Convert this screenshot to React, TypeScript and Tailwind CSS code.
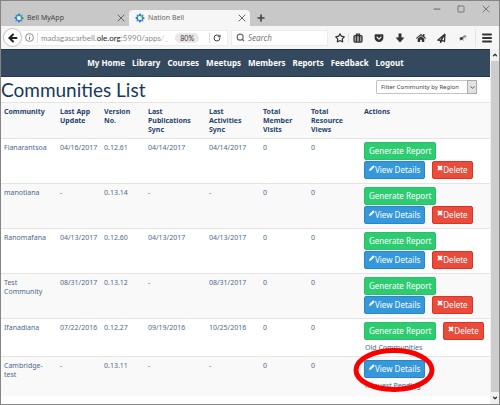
import React from "react";
import { ArrowLeft, ChevronDown, ChevronUp, Menu, Minus, Plus, RotateCw, Search, Square, Star, X } from "lucide-react";
import { FaGetPocket, FaHome } from "react-icons/fa";

type ActionKind = "report" | "view" | "delete";

interface Community {
  name: string;
  updated: string;
  version: string;
  publications: string;
  activities: string;
  actions: ActionKind[];
  note?: string;
  highlighted?: boolean;
}

const full: ActionKind[] = ["report", "view", "delete"];

const communities: Community[] = [
  { name: "Fianarantsoa", updated: "04/16/2017", version: "0.12.61", publications: "04/14/2017", activities: "04/14/2017", actions: full },
  { name: "manotiana", updated: "-", version: "0.13.14", publications: "-", activities: "-", actions: full },
  { name: "Ranomafana", updated: "04/13/2017", version: "0.12.60", publications: "04/13/2017", activities: "04/13/2017", actions: full },
  { name: "Test Community", updated: "08/31/2017", version: "0.13.12", publications: "-", activities: "08/31/2017", actions: full },
  { name: "Ifanadiana", updated: "07/22/2016", version: "0.12.27", publications: "09/19/2016", activities: "10/25/2016", actions: ["report", "delete"], note: "Old Communities" },
  { name: "Cambridge-test", updated: "-", version: "0.13.11", publications: "-", activities: "-", actions: ["view"], note: "Request Pending", highlighted: true },
];

const navLinks = ["My Home", "Library", "Courses", "Meetups", "Members", "Reports", "Feedback", "Logout"];

const columns = [
  { label: "Community", width: "w-[56px]" },
  { label: "Last App Update", width: "w-[44px]" },
  { label: "Version No.", width: "w-[44px]" },
  { label: "Last Publications Sync", width: "w-[61px]" },
  { label: "Last Activities Sync", width: "w-[54px]" },
  { label: "Total Member Visits", width: "w-[48px]" },
  { label: "Total Resource Views", width: "w-[53px]" },
  { label: "Actions", width: "" },
];

function Logo() {
  return (
    <svg viewBox="0 0 20 20" className="size-[10px] shrink-0" aria-hidden="true">
      {[0, 45, 90, 135, 180, 225, 270, 315].map((angle) => (
        <path
          key={angle}
          d="M7 6 L10 0 L13 4 L10 7 Z"
          fill={angle % 90 === 0 ? "#1c75bc" : "#3a9bd0"}
          transform={`rotate(${angle} 10 10)`}
        />
      ))}
      <circle cx="10" cy="10" r="4" fill="#f2f6e8" />
      <path d="M10 6 a4 4 0 0 1 4 4" fill="none" stroke="#b5c93a" strokeWidth="2" />
    </svg>
  );
}

function ActionButton({ kind }: { kind: ActionKind }) {
  const base = "flex h-[18px] items-center whitespace-nowrap rounded-[2px] border px-1 text-[8px] leading-[10px] text-white";
  if (kind === "report") {
    return <button type="button" className={`${base} border-[#27c267] bg-[#2ecc71]`}>Generate Report</button>;
  }
  if (kind === "view") {
    return (
      <button type="button" className={`${base} border-[#2688cc] bg-[#3498db]`}>
        <svg viewBox="0 0 12 12" className="mb-1 size-[6px]" fill="currentColor" aria-hidden="true">
          <path d="M0 12l1-4 7.5-7.5 3 3L4 11z" />
        </svg>
        View Details
      </button>
    );
  }
  return (
    <button type="button" className={`${base} border-[#e5301f] bg-[#e74c3c]`}>
      <svg viewBox="0 0 12 12" className="mb-1 size-[6px]" stroke="currentColor" strokeWidth="4" aria-hidden="true">
        <path d="M2 2l8 8M10 2l-8 8" />
      </svg>
      Delete
    </button>
  );
}

function BrowserChrome() {
  const tool = "flex w-[21px] justify-center";
  return (
    <header className="text-[#444]">
      <div className="flex h-[25px] items-end bg-[#c8c8c8] text-[7px]">
        <div className="flex h-4 w-[128px] items-center gap-[3px] pl-[13px] pr-[2px]">
          <Logo />
          <span className="flex-1">Bell MyApp</span>
          <button type="button" aria-label="Close Bell MyApp" className="text-[#666]"><X className="size-3" strokeWidth={2} /></button>
        </div>
        <div className="flex h-4 w-[121px] items-center gap-[3px] rounded-t-[4px] bg-[#f6f6f6] pl-[6px] pr-[2px]">
          <Logo />
          <span className="flex-1 text-[#666]">Nation Bell</span>
          <button type="button" aria-label="Close Nation Bell" className="text-[#666]"><X className="size-3" strokeWidth={2} /></button>
        </div>
        <button type="button" aria-label="New tab" className="flex h-4 items-center pl-[6px]">
          <Plus className="size-[10px]" strokeWidth={4} />
        </button>
        <div className="ml-auto flex items-center gap-[15px] self-start pr-[7px] pt-[2px] text-[#777]">
          <button type="button" aria-label="Minimize"><Minus className="size-[10px]" strokeWidth={3} /></button>
          <button type="button" aria-label="Maximize"><Square className="size-2" strokeWidth={3} /></button>
          <button type="button" aria-label="Close window"><X className="size-3" strokeWidth={2} /></button>
        </div>
      </div>
      <div className="flex h-[23px] items-center bg-[#f6f6f6] pl-[2px]">
        <button type="button" aria-label="Back" className="flex size-[19px] shrink-0 items-center justify-center rounded-full border border-[#c4c4c4] bg-white text-[#222]">
          <ArrowLeft className="size-3" strokeWidth={4} />
        </button>
        <div className="flex h-4 w-[206px] items-center border-y border-r border-[#ececec] bg-white font-['Lato','Noto_Sans',sans-serif] text-[8px]">
          <svg viewBox="0 0 16 16" className="ml-[3px] size-[9px] shrink-0" fill="none" stroke="#777" strokeWidth="1.5" aria-hidden="true">
            <circle cx="8" cy="8" r="7" />
            <path d="M8 7v5M8 4v1.5" />
          </svg>
          <span className="mx-[3px] h-[10px] w-px bg-[#ddd]" />
          <div className="flex-1 whitespace-nowrap text-[#8a8a8a]">
            madagascarbell.<span className="text-[#222]">ole.org</span>:5990/apps<span className="text-[#ccc]">/_</span>
          </div>
          <span className="rounded-full bg-[#e8e8e8] px-[5px] text-[7px] leading-[10px] text-[#333]">80%</span>
          <span className="ml-[10px] h-[10px] w-px bg-[#ddd]" />
          <button type="button" aria-label="Reload" className="ml-[3px] mr-[6px]"><RotateCw className="size-2" strokeWidth={3} /></button>
        </div>
        <label className="ml-[3px] flex h-4 w-[97px] items-center gap-[3px] border border-[#ececec] bg-white pl-1">
          <Search className="size-[9px] shrink-0 text-[#666]" strokeWidth={3} />
          <input type="search" aria-label="Search" placeholder="Search" className="w-full min-w-0 text-[8px] italic placeholder:text-[#777]" />
        </label>
        <div className="flex flex-1 items-center pl-[7px] text-[#333]">
          <button type="button" aria-label="Bookmark"><Star className="size-[10px]" strokeWidth={3} /></button>
          <span className="ml-[3px] mr-[-2px] h-[10px] w-px bg-[#ddd]" />
          <button type="button" aria-label="Bookmarks list" className={tool}>
            <svg viewBox="0 0 20 20" className="size-[10px]" fill="none" stroke="currentColor" strokeWidth="2.5" aria-hidden="true">
              <rect x="2" y="5" width="16" height="13" rx="2" fill="#aaa" />
              <path d="M7 5V2h6v3M7 5v13M13 5v13" />
            </svg>
          </button>
          <button type="button" aria-label="Pocket" className={tool}><FaGetPocket className="size-[10px]" /></button>
          <button type="button" aria-label="Downloads" className={tool}>
            <svg viewBox="0 0 20 20" className="size-[10px]" fill="currentColor" aria-hidden="true">
              <path d="M7 1h6v8h6l-9 10L1 9h6z" />
            </svg>
          </button>
          <button type="button" aria-label="Home" className={tool}><FaHome className="size-[10px]" /></button>
          <button type="button" aria-label="Share" className={tool}>
            <svg viewBox="0 0 20 20" className="size-[10px]" fill="none" stroke="currentColor" strokeWidth="2.5" aria-hidden="true">
              <path d="M16 2L2 14l5 1zM16 2l-1 15-6-3zM7 15v4l3-4" />
            </svg>
          </button>
          <button type="button" aria-label="Firebug" className={tool}>
            <svg viewBox="0 0 16 16" className="size-2" aria-hidden="true">
              <ellipse cx="5" cy="9" rx="4" ry="3" fill="#444" transform="rotate(-15 5 9)" />
              <ellipse cx="11" cy="5" rx="4" ry="2" fill="#888" transform="rotate(-20 11 5)" />
              <path d="M3 12l-1 2M8 11l1 3M13 8l2 1" stroke="#777" />
            </svg>
          </button>
          <span className="ml-[2px] mr-[5px] h-[18px] w-px bg-[#e4e4e4]" />
          <button type="button" aria-label="Menu"><Menu className="size-3" strokeWidth={4} /></button>
        </div>
      </div>
    </header>
  );
}

function CommunitiesTable() {
  return (
    <table className="w-full table-fixed border-collapse text-left text-[7px] leading-[9px] text-[#4a6a8c]">
      <thead>
        <tr className="h-9 border-t border-[#e4e4e4] bg-[#f9f9f9] align-top text-[#1f4370]">
          {columns.map((column) => (
            <th key={column.label} scope="col" className={`${column.width} pl-[3px] pr-[5px] pt-1 font-bold`}>{column.label}</th>
          ))}
        </tr>
      </thead>
      <tbody>
        {communities.map((community) => (
          <tr key={community.name} className="border-t border-[#e4e4e4] align-top last:h-[39px] even:bg-[#f9f9f9]">
            <td className="pl-[3px] pr-[5px] pt-1">{community.name}</td>
            <td className="pl-[3px] pt-1">{community.updated}</td>
            <td className="pl-[3px] pt-1">{community.version}</td>
            <td className="pl-[3px] pt-1">{community.publications}</td>
            <td className="pl-[3px] pt-1">{community.activities}</td>
            <td className="pl-[3px] pt-1">0</td>
            <td className="pl-[3px] pt-1">0</td>
            <td className="relative pb-1 pl-[3px] pt-[3px]">
              <div className="flex flex-wrap gap-x-[7px] gap-y-px">
                {community.actions.map((kind) => <ActionButton key={kind} kind={kind} />)}
              </div>
              {community.note && <div className="mt-[3px] pl-px">{community.note}</div>}
              {community.highlighted && (
                <svg viewBox="0 0 82 46" className="pointer-events-none absolute -left-2 -top-[10px] h-[46px] w-[82px]" aria-hidden="true">
                  <ellipse cx="41" cy="23" rx="38" ry="19.5" fill="none" stroke="#fb0000" strokeWidth="5" />
                </svg>
              )}
            </td>
          </tr>
        ))}
      </tbody>
    </table>
  );
}

export default function App() {
  return (
    <div className="flex min-h-screen flex-col border border-[#858585] bg-white font-['Noto_Sans','Open_Sans',sans-serif]">
      <BrowserChrome />
      <div className="flex flex-1">
        <main className="min-w-0 flex-1">
          <nav className="flex h-[28px] items-center justify-center gap-[7px] border-y border-[#1d3850] bg-[#34495e] text-[8px] font-bold text-white">
            {navLinks.map((link) => <a key={link} href="#">{link}</a>)}
          </nav>
          <div className="flex h-[25px] items-start justify-between pr-[13px]">
            <h1 className="font-['Lato',sans-serif] text-[19px] leading-[25px] text-[#17375e]">Communities List</h1>
            <div className="relative mt-[3px] font-['Noto_Sans',sans-serif] text-[6px]">
              <select aria-label="Filter Community by Region" className="h-[14px] w-[101px] appearance-none rounded-[1px] border border-[#c4c4c4] bg-white pl-1 text-[#444]">
                <option>Filter Community by Region</option>
              </select>
              <span className="pointer-events-none absolute right-0 top-0 flex h-[14px] w-[10px] items-center justify-center border border-[#aaa] bg-[#e2e2e2] text-[#444]">
                <ChevronDown className="size-[7px]" strokeWidth={3} />
              </span>
            </div>
          </div>
          <CommunitiesTable />
        </main>
        <div className="flex w-[9px] flex-col items-center justify-between bg-[#f0f0f0] text-[#333]">
          <ChevronUp className="my-[3px] size-[6px] shrink-0" strokeWidth={5} />
          <div className="w-2 flex-1 bg-[#cdcdcd]" />
          <ChevronDown className="my-[3px] size-[6px] shrink-0" strokeWidth={5} />
        </div>
      </div>
    </div>
  );
}
